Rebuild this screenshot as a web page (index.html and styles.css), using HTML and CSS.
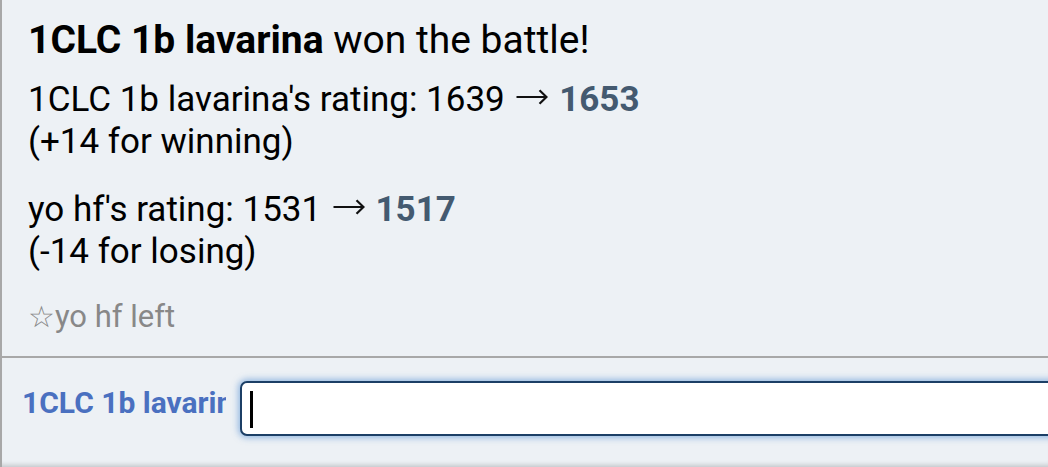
FILE: index.html
```html
<!DOCTYPE html>
<html>
<head>
<meta charset="utf-8">
<link rel="stylesheet" href="styles.css">
</head>
<body>
<div class="room">
  <div class="log">
    <div class="msg win"><strong>1CLC 1b lavarina</strong> won the battle!</div>
    <div class="msg rating">1CLC 1b lavarina's rating: 1639 <svg class="arrow" viewBox="0 0 32 16" role="img" aria-label="→"><path d="M0.5 8H30.5M23.5 1.2L30.5 8L23.5 14.8"/></svg> <strong class="new">1653</strong><br>(+14 for winning)</div>
    <div class="msg rating">yo hf's rating: 1531 <svg class="arrow" viewBox="0 0 32 16" role="img" aria-label="→"><path d="M0.5 8H30.5M23.5 1.2L30.5 8L23.5 14.8"/></svg> <strong class="new">1517</strong><br>(-14 for losing)</div>
    <div class="msg leave"><span class="star">&#9734;</span>yo hf left</div>
  </div>
  <div class="chatbar">
    <div class="name">1CLC 1b lavarina</div>
    <div class="box"><span class="caret"></span></div>
  </div>
</div>
</body>
</html>
```

FILE: styles.css
```css
html, body {
  margin: 0;
  padding: 0;
  height: 100%;
  overflow: hidden;
}
body {
  background: #edf1f5;
  font-family: Roboto, "Noto Sans", sans-serif;
  color: #000;
}
.room {
  height: 467px;
  border-left: 2px solid #a8a8a8;
  display: flex;
  flex-direction: column;
  box-sizing: border-box;
}
.log {
  height: 358px;
  padding: 18px 0 0 26px;
  box-sizing: border-box;
  border-bottom: 2px solid #a8a8a8;
}
.msg {
  font-size: 35px;
  line-height: 42px;
  white-space: nowrap;
}
.win {
  font-size: 39px;
  line-height: 45px;
  margin-bottom: 16px;
}
.rating {
  margin-bottom: 26px;
}
.arrow {
  width: 32px;
  height: 16px;
  margin: 0 2px 0 3px;
  vertical-align: 6px;
  fill: none;
  stroke: #111;
  stroke-width: 2.2;
  stroke-linecap: butt;
}
.new {
  color: #445a70;
}
.leave {
  font-size: 31px;
  line-height: 36px;
  color: #888;
}
.star {
  font-family: "DejaVu Sans", sans-serif;
  font-size: 30px;
  line-height: 1;
}
.chatbar {
  flex: 1;
  display: flex;
  align-items: flex-start;
  padding: 21px 0 0 20px;
  box-shadow: inset 0 -6px 5px -4px rgba(0,0,0,0.18);
}
.name {
  width: 204px;
  overflow: hidden;
  white-space: nowrap;
  font-size: 30px;
  line-height: 48px;
  font-weight: bold;
  color: #4a70c0;
  flex-shrink: 0;
}
.box {
  position: relative;
  margin: 2px -20px 0 14px;
  flex: 1;
  height: 51px;
  background: #fff;
  border: 2px solid #1c3f66;
  border-radius: 7px;
  box-shadow: 0 0 6px 2px rgba(80, 140, 210, 0.55);
}
.caret {
  position: absolute;
  left: 8px;
  top: 8px;
  width: 3px;
  height: 37px;
  background: #000;
}
```
